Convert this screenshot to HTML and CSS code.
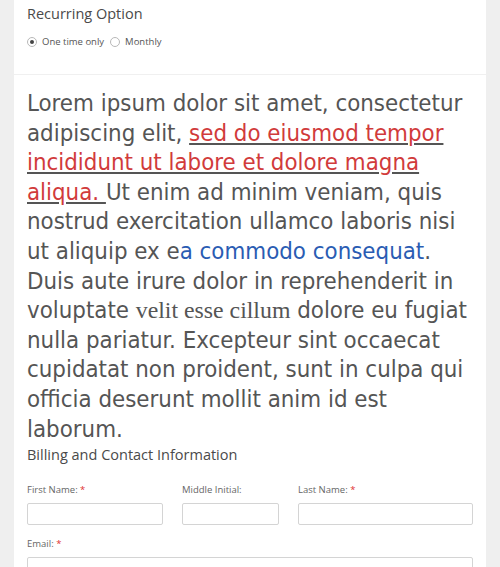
FILE: index.html
```html
<!DOCTYPE html>
<html>
<head>
<meta charset="utf-8">
<link rel="stylesheet" href="styles.css">
</head>
<body>
<div class="card">
  <section class="recurring">
    <h3 class="section-title">Recurring Option</h3>
    <div class="radios">
      <label class="radio"><span class="dot checked"></span>One time only</label>
      <label class="radio"><span class="dot"></span>Monthly</label>
    </div>
  </section>
  <section class="content">
    <p class="lorem">Lorem ipsum dolor sit amet, consectetur adipiscing elit, <a class="red">sed do eiusmod tempor incididunt ut labore et dolore magna aliqua. </a>Ut enim ad minim veniam, quis nostrud exercitation ullamco laboris nisi ut aliquip ex e<span class="blue">a commodo consequat</span>. Duis aute irure dolor in reprehenderit in voluptate <span class="serif">velit esse cillum</span> dolore eu fugiat nulla pariatur. Excepteur sint occaecat cupidatat non proident, sunt in culpa qui officia deserunt mollit anim id est laborum.</p>
    <h3 class="section-title billing">Billing and Contact Information</h3>
    <div class="name-row">
      <div class="field">
        <label class="flabel">First Name: <span class="req">*</span></label>
        <div class="input"></div>
      </div>
      <div class="field">
        <label class="flabel">Middle Initial:</label>
        <div class="input"></div>
      </div>
      <div class="field">
        <label class="flabel">Last Name: <span class="req">*</span></label>
        <div class="input"></div>
      </div>
    </div>
    <div class="field email">
      <label class="flabel">Email: <span class="req">*</span></label>
      <div class="input"></div>
    </div>
  </section>
</div>
</body>
</html>
```
FILE: styles.css
```css
html, body {
  margin: 0;
  padding: 0;
  background: #efefef;
}
.card {
  margin: 0 14px;
  background: #fff;
  min-height: 567px;
}
.recurring {
  padding: 5px 13px 0;
  height: 69px;
  border-bottom: 1px solid #f0f0f0;
}
.section-title {
  margin: 0;
  font-family: "Open Sans", sans-serif;
  font-weight: 400;
  font-size: 14.5px;
  line-height: 18px;
  color: #4a4a4a;
}
.radios {
  display: flex;
  gap: 6px;
  margin-top: 12px;
  font-family: "Open Sans", sans-serif;
  font-size: 9.5px;
  color: #555;
}
.radio {
  display: flex;
  align-items: center;
  gap: 5px;
}
.dot {
  width: 8px;
  height: 8px;
  border: 1px solid #b8b8b8;
  border-radius: 50%;
  background: #fff;
  position: relative;
}
.dot.checked::after {
  content: "";
  position: absolute;
  left: 2px;
  top: 2px;
  width: 4px;
  height: 4px;
  border-radius: 50%;
  background: #444;
}
.content {
  padding: 14px 13px 0;
}
.lorem {
  margin: 0;
  font-family: "DejaVu Sans Condensed", "DejaVu Sans", sans-serif;
  font-stretch: condensed;
  font-size: 23.8px;
  line-height: 29.6px;
  color: #555;
}
.red {
  color: #d13b3b;
  text-decoration: underline;
  text-decoration-color: #555;
}
.blue {
  color: #2a5cb3;
}
.serif {
  font-family: "Liberation Serif", serif;
}
.billing {
  margin-top: 2px;
}
.name-row {
  display: grid;
  grid-template-columns: 136px 97px 1fr;
  gap: 19px;
  margin-top: 19px;
}
.field {
  display: flex;
  flex-direction: column;
}
.flabel {
  font-family: "Open Sans", sans-serif;
  font-size: 9.5px;
  line-height: 13px;
  color: #666;
}
.req {
  color: #e03030;
}
.input {
  margin-top: 7px;
  height: 20px;
  border: 1px solid #d4d4d4;
  border-radius: 2px;
  background: #fff;
}
.email {
  margin-top: 12px;
}
```
